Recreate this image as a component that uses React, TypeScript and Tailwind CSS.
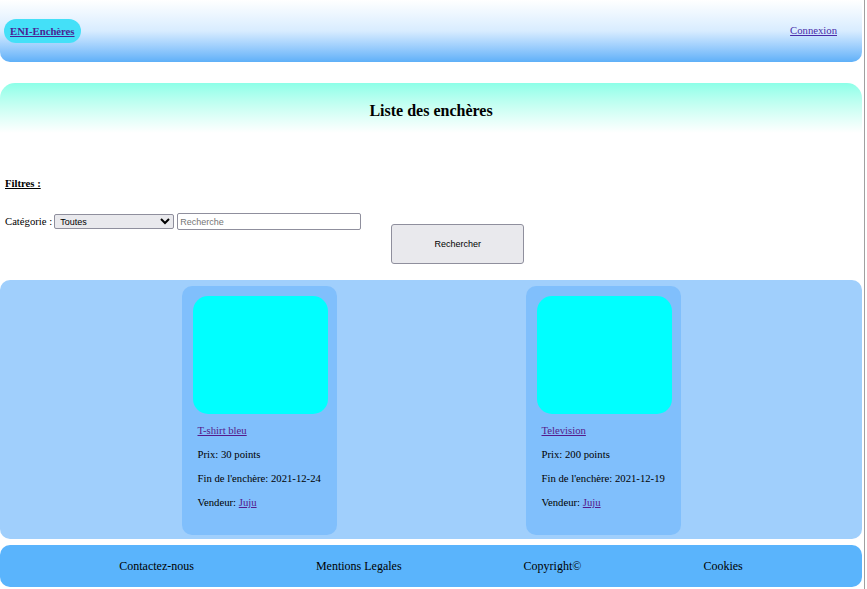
const serif = { fontFamily: '"Liberation Serif", "Times New Roman", serif' };
const sans = { fontFamily: '"Liberation Sans", Arial, sans-serif' };

type Item = { title: string; price: number; end: string; seller: string };

const items: Item[] = [
  { title: "T-shirt bleu", price: 30, end: "2021-12-24", seller: "Juju" },
  { title: "Television", price: 200, end: "2021-12-19", seller: "Juju" },
];

function Card({ item }: { item: Item }) {
  return (
    <div className="w-[155px] h-[249px] bg-[#80bffc] rounded-[10px] pt-[10px] pl-[11px]">
      <div className="w-[135px] h-[118px] bg-[#00ffff] rounded-[15px]" />
      <div className="mt-[10px] pl-[5px] flex flex-col gap-[12px] text-[10.7px] leading-[12px] text-black">
        <a href="#" className="underline text-[#551a8b]">{item.title}</a>
        <p>Prix: {item.price} points</p>
        <p>Fin de l'enchère: {item.end}</p>
        <p>
          Vendeur: <a href="#" className="underline text-[#551a8b]">{item.seller}</a>
        </p>
      </div>
    </div>
  );
}

export default function App() {
  return (
    <div className="min-h-screen bg-white w-[865px] border-r border-[#a0a0a0]" style={serif}>
      <div className="w-[862px]">
        <header className="h-[62px] flex items-center justify-between pl-[4px] pr-[25px] rounded-b-[10px] bg-linear-to-b from-white via-[#d8ecff] to-[#5fb0f8]">
          <a href="#" className="px-[6px] h-[24px] flex items-center rounded-full bg-[#44e0f8] text-[10.7px] font-bold underline text-[#4b1f93]">
            ENI-Enchères
          </a>
          <a href="#" className="mb-[2px] text-[10.7px] underline text-[#4a2aa8]">Connexion</a>
        </header>

        <div className="mt-[21px] h-[50px] pt-[5px] flex items-center justify-center rounded-t-[15px] bg-linear-to-b from-[#8cffe8] to-white">
          <h2 className="text-[16px] font-bold text-black">Liste des enchères</h2>
        </div>

        <div className="pt-[44px] pl-[5px] text-[10.7px] leading-[12px] text-black">
          <div className="font-bold underline">Filtres :</div>
          <div className="mt-[24px] flex items-start">
            <span className="mt-[2px]">Catégorie :</span>
            <select
              className="ml-[2px] mt-[1px] w-[120px] h-[15px] bg-[#e9e9ed] border border-[#8f8f9d] rounded-[2px] text-[9px] leading-[11px] px-[1px]"
              style={sans}
              defaultValue="Toutes"
            >
              <option>Toutes</option>
            </select>
            <input
              placeholder="Recherche"
              className="ml-[3px] w-[184px] h-[17px] border border-[#8f8f9d] rounded-[2px] px-[2px] text-[9px] placeholder:text-[#757575]"
              style={sans}
            />
            <button
              className="ml-[30px] mt-[11px] w-[133px] h-[40px] bg-[#e9e9ed] border border-[#8f8f9d] rounded-[3px] text-[9px] text-black"
              style={sans}
            >
              Rechercher
            </button>
          </div>
        </div>

        <section className="mt-[16px] h-[259px] bg-[#a0cffc] rounded-[10px] pt-[6px] flex justify-center gap-[189px]">
          {items.map((it) => (
            <Card key={it.title} item={it} />
          ))}
        </section>

        <footer className="mt-[6px] h-[42px] pb-[1px] bg-[#5ab4fc] rounded-[10px] flex items-center justify-center gap-[122px] text-[12px] text-black">
          <span>Contactez-nous</span>
          <span>Mentions Legales</span>
          <span>Copyright©</span>
          <span>Cookies</span>
        </footer>
      </div>
    </div>
  );
}
